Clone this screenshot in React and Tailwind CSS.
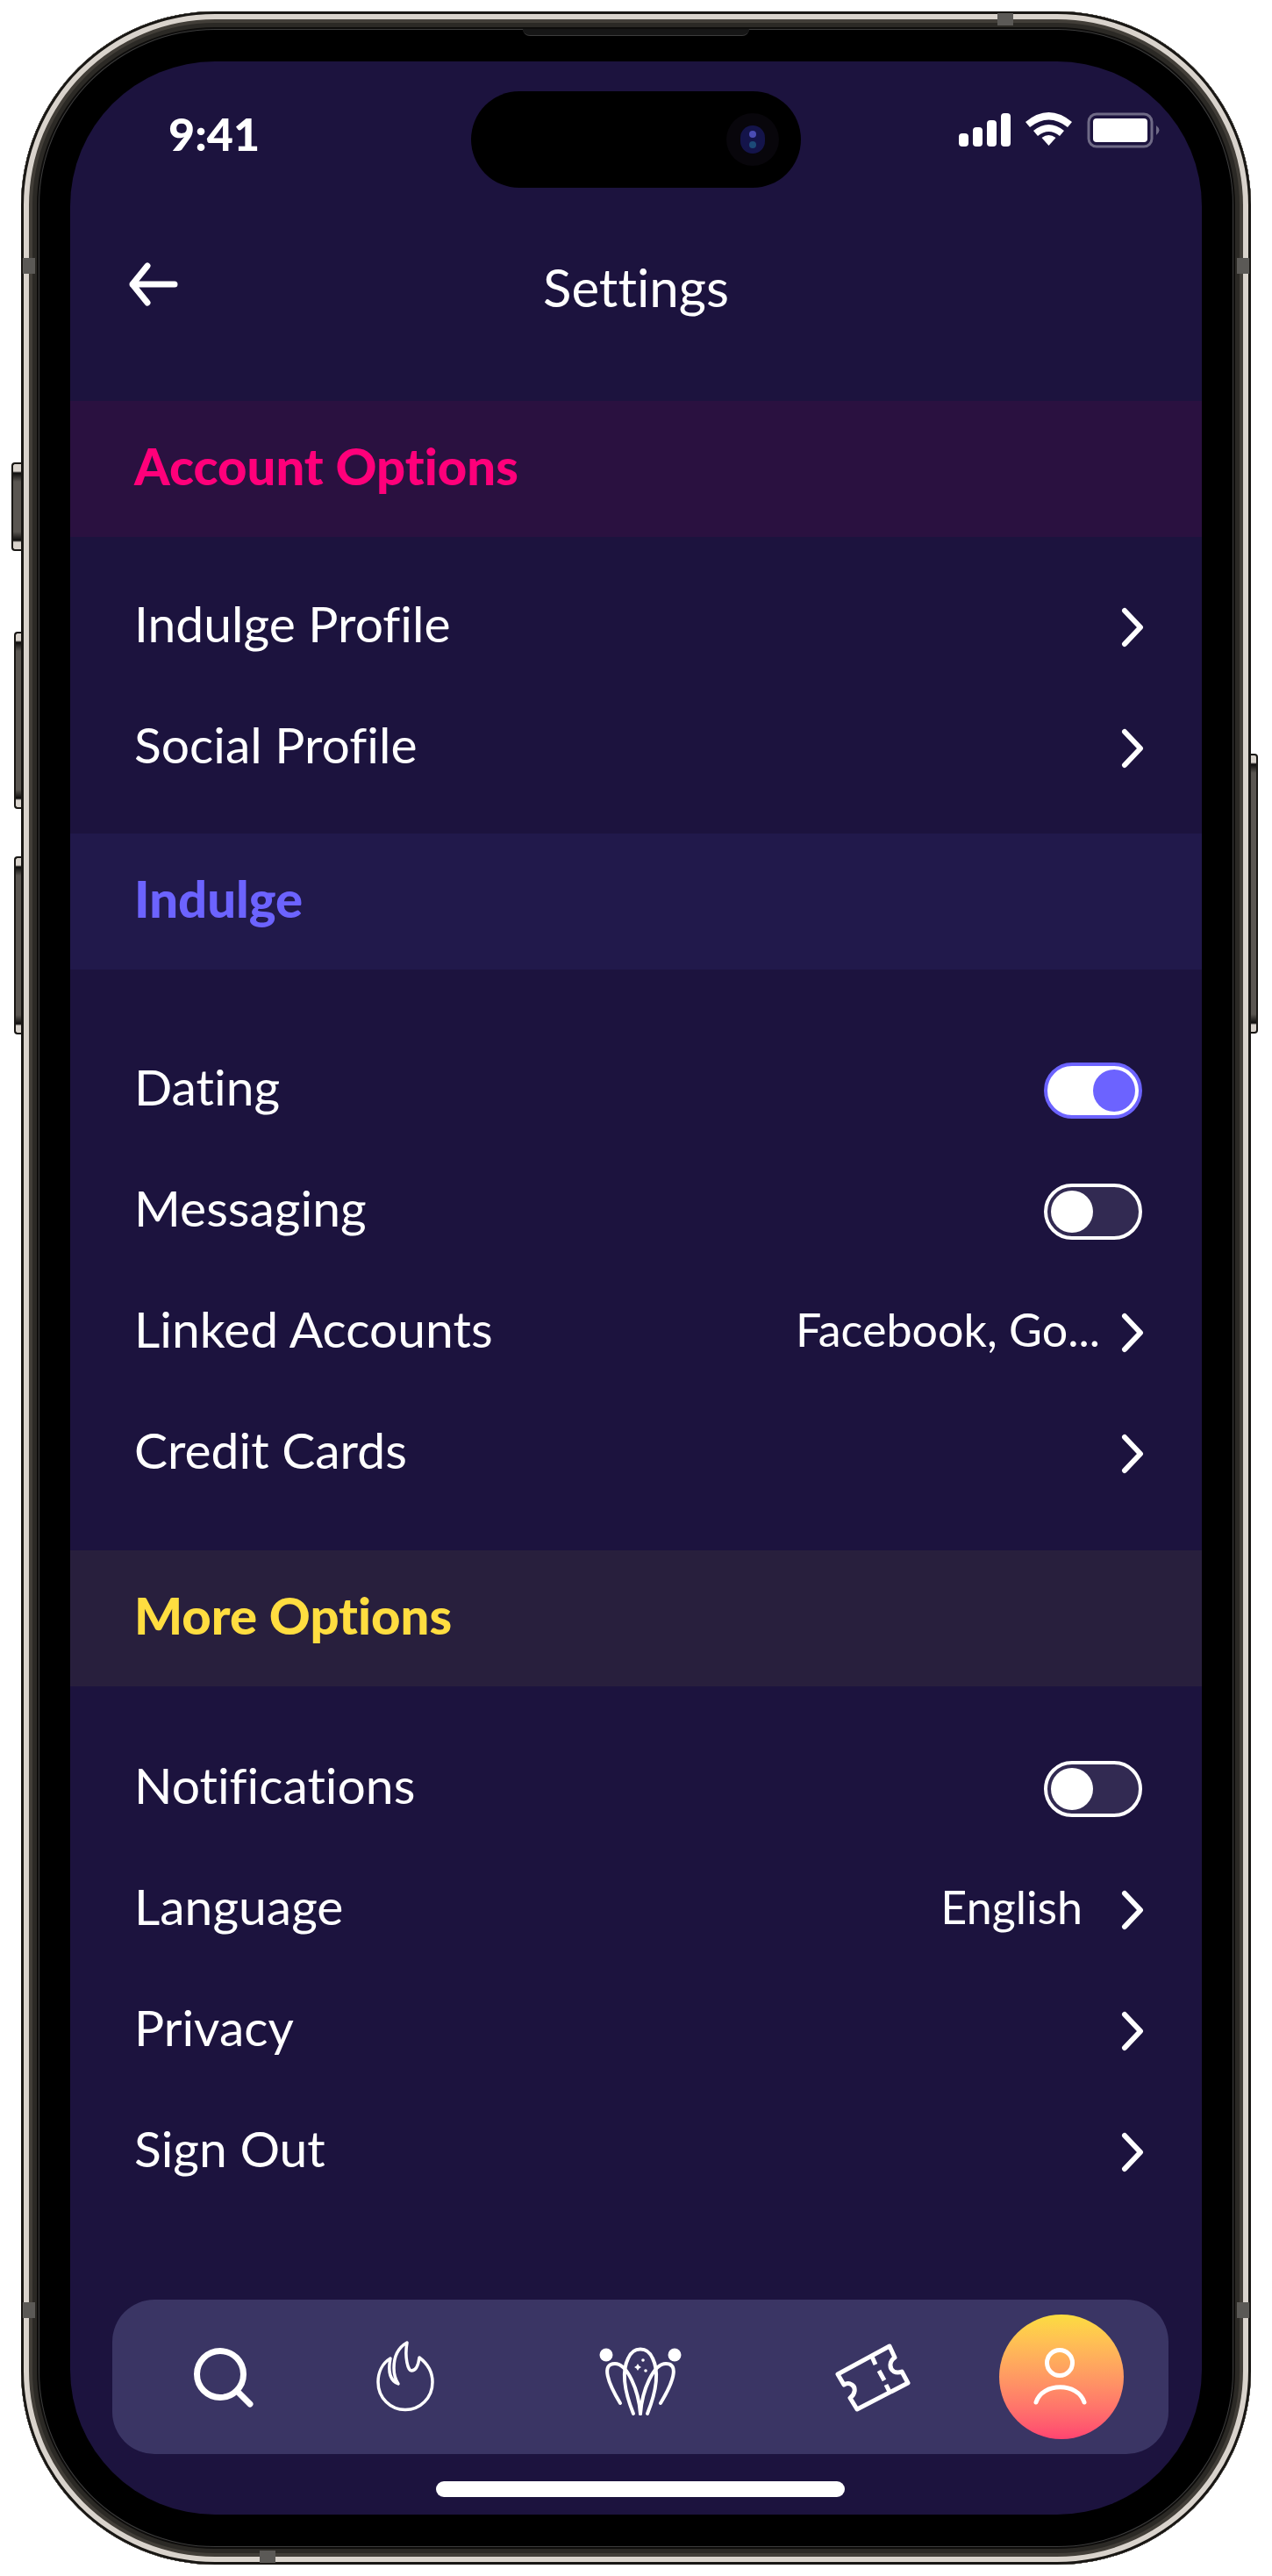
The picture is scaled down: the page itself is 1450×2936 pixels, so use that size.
import { useState } from "react";

const account = [{ label: "Indulge Profile" }, { label: "Social Profile" }];

const indulge = [
  { label: "Dating", toggle: true, on: true },
  { label: "Messaging", toggle: true, on: false },
  { label: "Linked Accounts", value: "Facebook, Go..." },
  { label: "Credit Cards" },
];

const more = [
  { label: "Notifications", toggle: true, on: false },
  { label: "Language", value: "English", valueClass: "pr-5" },
  { label: "Privacy" },
  { label: "Sign Out" },
];

const sideKey =
  "absolute border-2 border-[#191714] bg-[linear-gradient(#d9d3cc_0_8px,#0d0c0b_10px,#5a5651_20px,#5a5651_calc(100%-20px),#0d0c0b_calc(100%-10px),#d9d3cc_calc(100%-8px))]";
const antenna = "absolute bg-[#5b5956]";

function Chevron() {
  return (
    <svg width="26" height="46" viewBox="0 0 26 46" fill="none" stroke="#fff" strokeWidth="6" strokeLinecap="round" strokeLinejoin="round" aria-hidden="true">
      <path d="M4 4l18 19L4 42" />
    </svg>
  );
}

function Row({ item }) {
  const [on, setOn] = useState(item.on);

  if (item.toggle) {
    return (
      <label className="flex h-[138px] items-center justify-between pl-[73px] pr-[68px]">
        <span className="pb-2">{item.label}</span>
        <span className="relative h-16 w-28">
          <input
            type="checkbox"
            checked={on}
            onChange={() => setOn(!on)}
            className="peer block h-16 w-28 appearance-none rounded-full border-4 border-white bg-[#322a52] checked:border-[#6c63ff] checked:bg-white"
          />
          <span className="pointer-events-none absolute top-2 left-2 size-12 rounded-full bg-white peer-checked:left-14 peer-checked:bg-[#6c63ff]" />
        </span>
      </label>
    );
  }

  return (
    <a href="#" className="flex h-[138px] items-center justify-between pl-[73px] pr-[66px]">
      <span className="pb-2">{item.label}</span>
      <span className="flex items-center gap-6 text-[52px]">
        {item.value && <span className={`pb-2 ${item.valueClass || ""}`}>{item.value}</span>}
        <Chevron />
      </span>
    </a>
  );
}

function StatusBar() {
  return (
    <div className="flex h-[176px] items-center justify-between pl-[112px] pr-[46px] pb-3">
      <span className="text-[52px] font-black">9:41</span>
      <svg width="232" height="56" viewBox="0 0 232 56" fill="#fff" aria-hidden="true">
        <rect x="1" y="28" width="11" height="15" rx="4" />
        <rect x="17" y="21" width="11" height="22" rx="4" />
        <rect x="33" y="13" width="11" height="30" rx="4" />
        <rect x="49" y="5" width="11" height="38" rx="4" />
        <path d="M103.500 42l-8-9q8-6 16 0z" />
        <path d="M86 25q17.500-14 35 0l-5 6q-12.500-10-25 0z" />
        <path d="M77 15q26.500-22 53 0l-5 6q-21.500-17-43 0z" />
        <rect x="149" y="6" width="72" height="37" rx="9" fill="none" stroke="#6f6a86" strokeWidth="3" />
        <rect x="154" y="11" width="62" height="27" rx="4" />
        <path d="M226 19q7 5.500 0 11z" fill="#6f6a86" />
      </svg>
    </div>
  );
}

function Nav() {
  return (
    <nav className="flex h-[176px] items-center justify-between rounded-[48px] bg-[#3a3564] pl-[90px] pr-[51px]">
      <div className="flex items-center gap-[135px] pr-3">
        <button type="button" aria-label="Search">
          <svg width="72" height="72" viewBox="0 0 72 72" fill="none" stroke="#fff" strokeWidth="7" strokeLinecap="round">
            <circle cx="33" cy="33" r="26.500" />
            <path d="M54 54l13 13" />
          </svg>
        </button>
        <button type="button" aria-label="Trending">
          <svg width="72" height="84" viewBox="0 0 72 84" fill="none" stroke="#fff" strokeWidth="3.500" strokeLinejoin="round">
            <path d="M20 21C10 27 6 38 6 48c0 18 14 31.500 31 31.500S68 66 68 48c0-13-7-22-15-28-1 8-4 15-9 15-4 0-8-15-5-32-9 5-15 15-15 29 0 7 1 12 5 18-10-4-12-14-9-29z" />
          </svg>
        </button>
      </div>
      <button type="button" aria-label="Garden">
        <svg width="96" height="90" viewBox="0 0 96 90" fill="none" stroke="#fff" strokeWidth="4" strokeLinecap="round">
          <path d="M40 87C30 62 26 40 34 24c6-14 22-14 28 0 8 16 4 38-6 63" />
          <path d="M48 87C46 60 33 30 19 30 3 30 11 52 25 75" />
          <path d="M48 87C50 60 63 30 77 30 93 30 85 52 71 75" />
          <g fill="#fff" stroke="none">
            <circle cx="9" cy="20" r="7.500" />
            <circle cx="87" cy="20" r="7.500" />
            <path d="M45 30l1.500 2.500L49 34l-2.500 1.500L45 38l-1.500-2.500L41 34l2.500-1.500z" />
            <circle cx="51" cy="26" r="1.800" />
            <circle cx="54" cy="38" r="1.800" />
          </g>
        </svg>
      </button>
      <div className="flex items-center gap-[100px]">
        <button type="button" aria-label="Tickets">
          <svg width="88" height="80" viewBox="0 0 88 80" fill="none" stroke="#fff" strokeWidth="5" strokeLinejoin="round">
            <path d="M4 37L63 5l6 13c-6 4-7 12-1 16q4 2 9 0l7 13-58 30-8-13c6-4 7-12 2-15q-4-3-9 0z" />
            <path d="M43 17l4 9M51 33l6 11M59 49l4 8" />
          </svg>
        </button>
        <button type="button" aria-label="Profile" className="flex size-[142px] items-center justify-center rounded-full bg-linear-to-b from-[#fbdc40] to-[#ff4470]">
          <svg width="66" height="70" viewBox="0 0 66 70" fill="none" stroke="#fff" strokeWidth="5" strokeLinecap="round">
            <circle cx="31" cy="19" r="14.500" />
            <path d="M4 64c7-23 48-23 55 0" />
          </svg>
        </button>
      </div>
    </nav>
  );
}

function SectionTitle({ children, className }) {
  return <h2 className={`flex h-[155px] items-center px-[73px] pb-2 text-[58px] font-black ${className}`}>{children}</h2>;
}

export default function App() {
  return (
    <div className="bg-white px-6 py-[13px] font-['Lato',sans-serif] text-[57px] text-white [font-variant-ligatures:none]">
      <div className="relative rounded-[221px] bg-black px-14 py-[57px] shadow-[inset_0_0_0_3px_#191714,inset_0_0_0_9px_#d9d3cc,inset_0_0_0_13px_#423e38,inset_0_0_0_18px_#2b2925,inset_0_0_0_20px_#0d0c0b,inset_0_0_0_21px_#3c3c3c]">
        <span className={`${sideKey} top-[514px] -left-[11px] h-[101px] w-[11px] rounded-l border-r-0`} />
        <span className={`${sideKey} top-[707px] -left-2 h-[202px] w-2 rounded-l border-r-0`} />
        <span className={`${sideKey} top-[963px] -left-2 h-[203px] w-2 rounded-l border-r-0`} />
        <span className={`${sideKey} top-[846px] -right-2 h-[319px] w-2 rounded-r border-l-0`} />

        <span className={`${antenna} top-[281px] left-0.5 h-[18px] w-3.5`} />
        <span className={`${antenna} top-[281px] right-0.5 h-[18px] w-3.5`} />
        <span className={`${antenna} bottom-[281px] left-0.5 h-[18px] w-3.5`} />
        <span className={`${antenna} right-0.5 bottom-[281px] h-[18px] w-3.5`} />
        <span className={`${antenna} top-0.5 right-[271px] h-3.5 w-[18px]`} />
        <span className={`${antenna} bottom-0.5 left-[272px] h-3.5 w-[18px]`} />

        {/* earpiece */}
        <span className="absolute top-5 left-1/2 h-2 w-[258px] -translate-x-1/2 rounded-b-lg border-b border-[#3c3c3c] bg-[#161616]" />

        <div className="relative overflow-hidden rounded-[165px] bg-[#1c133e]">
          <div className="absolute top-[34px] left-1/2 flex h-[110px] w-[376px] -translate-x-1/2 items-center justify-end rounded-full bg-black pr-[25px]">
            <span className="flex size-[60px] items-center justify-center rounded-full bg-[#08060b]">
              <span className="flex h-8 w-7 flex-col items-center justify-center gap-1 rounded-full bg-[#14144a]">
                <span className="size-2 rounded-full bg-[#4a4cb4]" />
                <span className="size-2 rounded-full bg-[#1c4a78]" />
              </span>
            </span>
          </div>
          <StatusBar />
          <header className="grid h-[211px] grid-cols-3 items-start px-[66px] pt-9">
            <button type="button" aria-label="Back" className="justify-self-start pt-4">
              <svg width="58" height="52" viewBox="0 0 58 52" fill="none" stroke="#fff" strokeWidth="7" strokeLinecap="round" strokeLinejoin="round">
                <path d="M22 5L5 26l17 21M5 26h48" />
              </svg>
            </button>
            <h1 className="justify-self-center text-[60px]">Settings</h1>
          </header>

          <SectionTitle className="bg-[#2a1140] text-[#ff007a]">Account Options</SectionTitle>
          <div className="pt-[34px] pb-7">
            {account.map((item) => <Row key={item.label} item={item} />)}
          </div>

          <SectionTitle className="bg-[#21194b] text-[#6c63ff]">Indulge</SectionTitle>
          <div className="pt-[69px] pb-[41px]">
            {indulge.map((item) => <Row key={item.label} item={item} />)}
          </div>

          <SectionTitle className="bg-[#281f3d] text-[#ffdd40]">More Options</SectionTitle>
          <div className="pt-12 pb-[99px]">
            {more.map((item) => <Row key={item.label} item={item} />)}
          </div>

          <div className="pr-[38px] pb-5 pl-12">
            <Nav />
            <div className="mx-auto mt-[31px] h-[18px] w-[466px] rounded-full bg-white" />
          </div>
        </div>
      </div>
    </div>
  );
}
